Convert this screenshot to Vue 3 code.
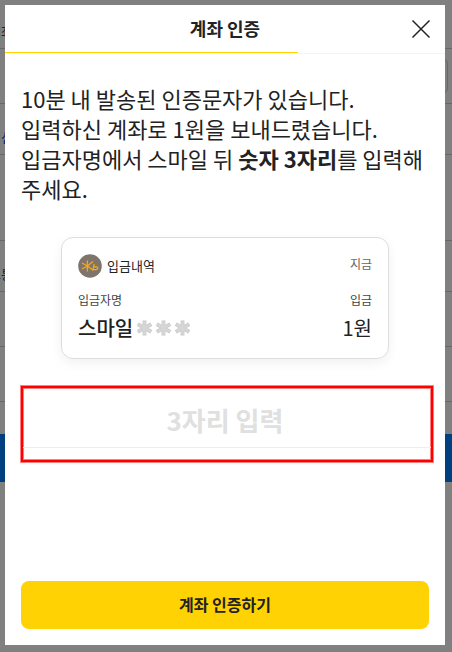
<script setup>
import { ref } from 'vue';

const code = ref('');

// 뒤에 깔린 신청서 화면의 행
const rows = [
  { id: 'account', height: 49, label: '계좌', color: '#2a1a1c' },
  { id: 'number', height: 55, field: true },
  { id: 'bank', height: 51, label: '행선', color: '#00206a' },
  { id: 'notice', height: 86 },
  { id: 'telecom', height: 51, label: '보통', color: '#26242c' },
  { id: 'phone', height: 55 },
  { id: 'agree', height: 55 }
];
</script>

<template>
  <div class="screen">
    <div class="page" aria-hidden="true">
      <div
        v-for="row in rows"
        :key="row.id"
        class="page-row"
        :style="{ height: row.height + 'px' }"
      >
        <span v-if="row.label" class="page-label" :style="{ color: row.color }">{{ row.label }}</span>
        <span v-if="row.field" class="page-field"></span>
      </div>
      <div class="page-submit"></div>
    </div>

    <div class="overlay">
      <section class="modal" role="dialog" aria-labelledby="modal-title">
        <header class="modal-header">
          <h1 id="modal-title" class="modal-title">계좌 인증</h1>
          <button type="button" class="close-button" aria-label="닫기">
            <svg width="20" height="20" viewBox="0 0 20 20">
              <path d="M1.5 1.5L18.5 18.5M18.5 1.5L1.5 18.5" fill="none" stroke="#222" stroke-width="1.5" />
            </svg>
          </button>
        </header>
        <div class="progress">
          <div class="progress-bar"></div>
        </div>

        <div class="modal-body">
          <p class="guide">
            10분 내 발송된 인증문자가 있습니다.<br />
            입력하신 계좌로 1원을 보내드렸습니다.<br />
            입금자명에서 스마일 뒤 <strong>숫자 3자리</strong>를 입력해 주세요.
          </p>

          <div class="deposit-card">
            <div class="card-row card-head">
              <span class="bank">
                <svg class="bank-icon" width="24" height="24" viewBox="0 0 24 24">
                  <circle cx="12" cy="12" r="11.8" fill="#7e746c" />
                  <path
                    d="M9.4 6.4V17.6M4 9L9.4 12L15.4 16.4M4 15L9.4 12L15 7.4M16.2 10L15 15.4Q19.4 16.4 19.8 14.2Q19.4 12.2 15.6 13.2"
                    fill="none"
                    stroke="#f5a81c"
                    stroke-width="1.3"
                  />
                </svg>
                <span class="bank-title">입금내역</span>
              </span>
              <span class="small">지금</span>
            </div>
            <div class="card-row">
              <span class="small dark">입금자명</span>
              <span class="small dark">입금</span>
            </div>
            <div class="card-row card-value">
              <span class="sender">
                스마일
                <svg v-for="n in 3" :key="n" width="15" height="16" viewBox="0 0 15 16">
                  <path d="M7.5 .5V15.5M.8 4.2L14.2 11.8M14.2 4.2L.8 11.8" fill="none" stroke="#c8c8c8" stroke-width="3.8" />
                  <path d="M7.5 1.3V14.7M1.5 4.6L13.5 11.4M13.5 4.6L1.5 11.4" fill="none" stroke="#d6d6d6" stroke-width="2.6" />
                </svg>
              </span>
              <span class="amount">1원</span>
            </div>
          </div>

          <div class="code-box">
            <input
              v-model="code"
              class="code-input"
              type="text"
              inputmode="numeric"
              maxlength="3"
              placeholder="3자리 입력"
              aria-label="숫자 3자리"
            />
          </div>
        </div>

        <footer class="modal-footer">
          <button type="button" class="submit-button">계좌 인증하기</button>
        </footer>
      </section>
    </div>
  </div>
</template>

<style>
body {
  background: #808080;
}
</style>

<style scoped>
.screen {
  position: relative;
  min-height: 100vh;
  overflow: hidden;
  background: #808080;
  color: #222;
  font-family: 'Noto Sans CJK KR', sans-serif;
}

.page-row {
  box-sizing: border-box;
  display: flex;
  align-items: center;
  justify-content: space-between;
  border-bottom: 1px solid #686868;
}

.page-label {
  margin-left: -11px;
  padding-top: 16px;
  font-size: 13px;
  line-height: 20px;
}

.page-field {
  box-sizing: border-box;
  width: 64px;
  height: 36px;
  margin: 0 4px 0 auto;
  border: 1px solid #686868;
  border-radius: 6px;
}

.page-submit {
  height: 48px;
  margin-top: 32px;
  background: #004080;
}

.overlay {
  position: absolute;
  inset: 0;
  display: flex;
  padding: 5px 7px 7px 5px;
}

.modal {
  display: flex;
  flex: 1;
  flex-direction: column;
  min-width: 0;
  background: #fff;
}

.modal-header {
  display: grid;
  grid-template-columns: 1fr auto 1fr;
  align-items: center;
  height: 47px;
  padding: 0 14px;
}

.modal-title {
  grid-column: 2;
  margin: 0;
  padding-bottom: 2px;
  font-size: 18px;
  font-weight: 700;
  line-height: 26px;
}

.close-button {
  display: flex;
  justify-self: end;
  padding: 0;
  border: 0;
  background: none;
  cursor: pointer;
}

.progress {
  border-bottom: 1px solid #f4f4f4;
}

.progress-bar {
  width: 66.6%;
  height: 1px;
  background: #ffd400;
}

.modal-body {
  flex: 1;
  padding: 29px 12px 24px 16px;
}

.guide {
  margin: 0;
  font-size: 22px;
  line-height: 30px;
}

.deposit-card {
  box-sizing: border-box;
  margin: 34px 44px 0 40px;
  padding: 16px;
  border: 1px solid #ddd;
  border-radius: 12px;
  box-shadow: 0 4px 12px rgba(0, 0, 0, 0.06);
}

.card-row {
  display: flex;
  align-items: center;
  justify-content: space-between;
}

.card-head {
  align-items: flex-start;
  margin-bottom: 12px;
}

.bank {
  display: flex;
  align-items: center;
  gap: 5px;
}

.bank-title {
  font-size: 13px;
  line-height: 24px;
}

.small {
  color: #666;
  font-size: 12px;
  line-height: 20px;
}

.small.dark {
  color: #444;
}

.card-value {
  margin-top: 4px;
  font-size: 20px;
  line-height: 28px;
}

.sender {
  display: flex;
  align-items: center;
  gap: 4px;
  font-weight: 500;
}

.code-box {
  margin-top: 27px;
  padding-bottom: 12px;
  border: 2px solid #f00;
  box-shadow: 0 0 0 1px rgba(255, 0, 0, 0.5), inset 0 0 0 1px rgba(255, 0, 0, 0.5);
}

.code-input {
  display: block;
  box-sizing: border-box;
  width: 100%;
  height: 60px;
  padding: 4px 4px 0 0;
  border: 0;
  border-bottom: 1px solid #eee;
  outline: 0;
  background: none;
  color: #222;
  font-family: inherit;
  font-size: 26px;
  font-weight: 700;
  text-align: center;
}

.code-input::placeholder {
  color: #e0e0e0;
  opacity: 1;
}

.modal-footer {
  padding: 0 16px 16px;
}

.submit-button {
  width: 100%;
  height: 48px;
  padding: 0 0 2px;
  border: 0;
  border-radius: 8px;
  background: #ffd204;
  color: #222;
  font-family: inherit;
  font-size: 16px;
  font-weight: 700;
  cursor: pointer;
}
</style>
